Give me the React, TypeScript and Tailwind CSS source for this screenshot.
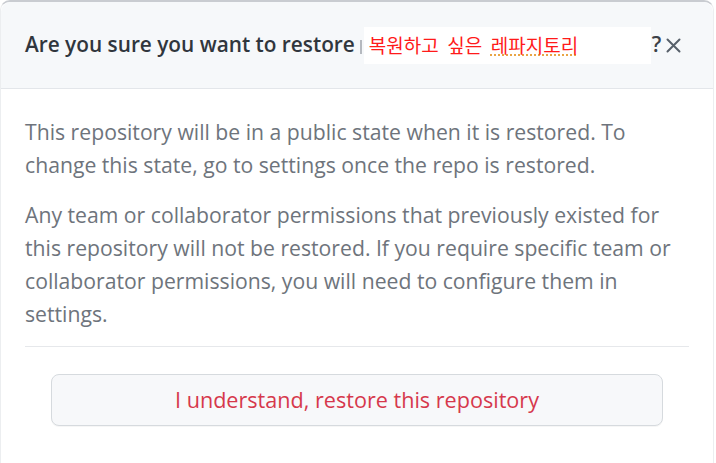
export default function App() {
  return (
    <div className="w-[716px] h-[463px] bg-white overflow-hidden font-['Open_Sans',sans-serif]">
      <div className="w-[714px] h-full rounded-t-[10px] border-t-2 border-x border-[#c9ccd1] border-x-[#eceef0] bg-white">
        <header className="h-[87px] bg-[#f6f8fa] border-b border-[#e3e6ea] rounded-t-[10px] flex items-center pl-6 pr-3">
          <h2 className="text-[20.8px] font-semibold text-[#30363d] whitespace-nowrap">Are you sure you want to restore</h2>
          <span className="ml-[5px] w-[2px] h-[14px] bg-[#b5b9bf] mt-1" />
          <div className="ml-[2px] w-[287px] h-[37px] bg-white flex items-center pl-[5px] font-['Noto_Sans_CJK_KR',sans-serif] text-[19px] text-[#ff1a1a] whitespace-pre">
            복원하고  싶은  <span className="underline decoration-dotted decoration-[#e8a13c] underline-offset-2">레파지토리</span>
          </div>
          <span className="ml-[1px] text-[21px] font-semibold text-[#3b4148]">?</span>
          <button className="ml-[5px] text-[#57606a]">
            <svg width="15" height="15" viewBox="0 0 15 15" fill="none" stroke="currentColor" strokeWidth="2" strokeLinecap="round">
              <path d="M1.5 1.5L13.5 13.5M13.5 1.5L1.5 13.5" />
            </svg>
          </button>
        </header>
        <div className="px-6 pt-[26px] text-[21.2px] leading-[33px] text-[#6e747c] whitespace-nowrap">
          <p className="mb-[17px]">
            This repository will be in a public state when it is restored. To
            <br />
            change this state, go to settings once the repo is restored.
          </p>
          <p>
            Any team or collaborator permissions that previously existed for
            <br />
            this repository will not be restored. If you require specific team or
            <br />
            collaborator permissions, you will need to configure them in
            <br />
            settings.
          </p>
        </div>
        <div className="mx-6 mt-[16px] border-t border-[#e6e8eb]" />
        <div className="px-[50px] pt-[27px]">
          <button className="w-[612px] h-[52px] rounded-[8px] border border-[#d6dade] bg-[#f7f8fa] shadow-[0_1px_0_rgba(27,31,36,0.04)] text-[21.6px] text-[#d6384c]">
            I understand, restore this repository
          </button>
        </div>
      </div>
    </div>
  )
}
